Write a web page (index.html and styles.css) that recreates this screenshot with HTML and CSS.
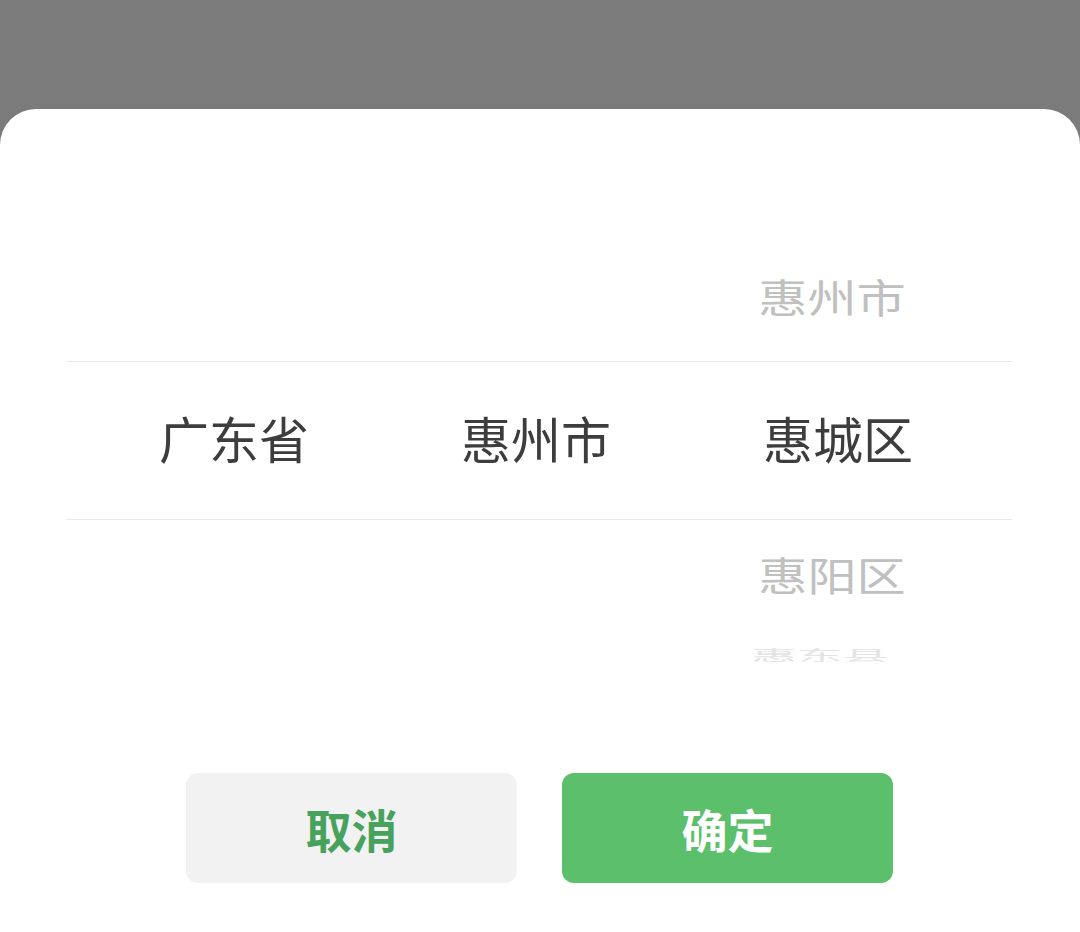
FILE: index.html
```html
<!DOCTYPE html>
<html lang="zh-CN">
<head>
<meta charset="utf-8">
<title>地区选择</title>
<link rel="stylesheet" href="styles.css">
</head>
<body>
<div class="mask"></div>
<div class="sheet">
  <div class="band band-top">
    <div class="cell"></div>
    <div class="cell"></div>
    <div class="cell"><span class="item item-dim">惠州市</span></div>
  </div>
  <div class="band band-mid">
    <div class="cell"><span class="item item-sel">广东省</span></div>
    <div class="cell"><span class="item item-sel">惠州市</span></div>
    <div class="cell"><span class="item item-sel">惠城区</span></div>
  </div>
  <div class="band band-bot">
    <div class="cell"></div>
    <div class="cell"></div>
    <div class="cell cell-stack">
      <span class="item item-dim">惠阳区</span>
      <span class="item item-far">惠东县</span>
    </div>
  </div>
  <div class="actions">
    <button class="btn btn-cancel">取消</button>
    <button class="btn btn-ok">确定</button>
  </div>
</div>
</body>
</html>
```

FILE: styles.css
```css
html, body {
  margin: 0;
  padding: 0;
}
body {
  width: 1080px;
  height: 932px;
  overflow: hidden;
  background: #7b7b7b;
  font-family: "Noto Sans CJK SC", "Noto Sans", sans-serif;
}
.mask {
  height: 109px;
}
.sheet {
  height: 823px;
  background: #ffffff;
  border-radius: 36px 36px 0 0;
  display: flex;
  flex-direction: column;
}
.band {
  margin: 0 68px 0 66px;
  display: grid;
  grid-template-columns: 302px 302px 302px;
  justify-content: center;
  padding-right: 6px;
}
.band-top {
  height: 252px;
  align-items: end;
}
.band-mid {
  height: 157px;
  border-top: 1px solid #e9e9e9;
  border-bottom: 1px solid #e9e9e9;
  align-items: center;
}
.band-mid .cell {
  padding-bottom: 8px;
}
.band-bot {
  height: 253px;
  align-items: start;
}
.cell {
  display: flex;
  justify-content: center;
}
.cell-stack {
  flex-direction: column;
  align-items: center;
}
.item {
  display: block;
  line-height: 1;
  white-space: nowrap;
}
.item-sel {
  font-size: 50px;
  color: #3d3d3d;
}
.item-dim {
  font-size: 46px;
  color: #c0c0c0;
  transform: scale(1.07, 0.86);
}
.band-top .item-dim {
  margin-bottom: 42px;
  margin-right: 12px;
}
.band-bot .item-dim {
  margin-top: 31px;
  margin-right: 12px;
}
.item-far {
  font-size: 44px;
  color: #e4e4e4;
  margin-top: 50px;
  margin-right: 36px;
  transform: scale(1.04, 0.32);
  transform-origin: center top;
  height: 16px;
}
.actions {
  display: flex;
  justify-content: center;
  gap: 45px;
  padding-right: 1px;
}
.btn {
  width: 331px;
  height: 110px;
  border: none;
  border-radius: 12px;
  font-family: "Noto Sans CJK SC", "Noto Sans", sans-serif;
  font-size: 46px;
  font-weight: 700;
  line-height: 1;
  padding: 0;
}
.btn-cancel {
  background: #f2f2f2;
  color: #46a25c;
}
.btn-ok {
  background: #5bbf6b;
  color: #ffffff;
}
```
